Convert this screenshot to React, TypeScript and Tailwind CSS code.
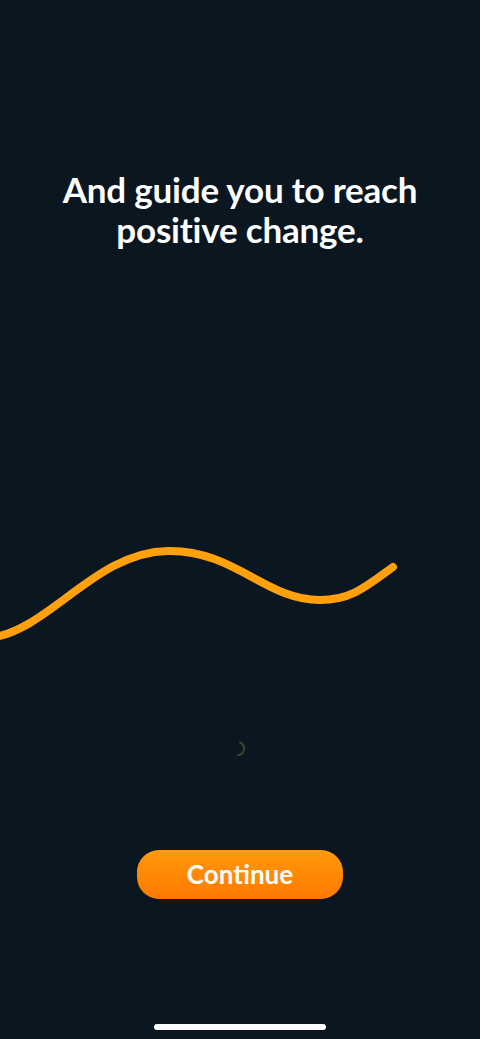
import React from 'react';

export default function App() {
  return (
    <div className="flex h-[1039px] w-[480px] flex-col items-center overflow-hidden bg-[#0a1620] font-['Lato',sans-serif] text-white">
      <h1 className="mt-[169px] w-full text-center text-[35px] font-bold leading-[40px] tracking-[-0.2px]">
        And guide you to reach
        <br />
        positive change.
      </h1>

      <svg className="mt-[281px] block shrink-0" width="480" height="120" viewBox="0 0 480 120">
        <path
          d="M -10 108 C 50 100, 95 22, 168 21 C 235 20, 265 70, 320 70 C 352 70, 368 55, 393 37"
          fill="none"
          stroke="#ffa00c"
          strokeWidth="8"
          strokeLinecap="round"
        />
      </svg>

      <svg className="mt-[90px] ml-[4px] block shrink-0" width="16" height="18" viewBox="0 0 16 18">
        <path d="M 6 2.5 A 6.5 6.5 0 0 1 4 15" fill="none" stroke="#3b4628" strokeWidth="2" strokeLinecap="round" />
      </svg>

      <button className="mt-[92px] flex h-[49px] w-[206px] items-center justify-center rounded-[22px] bg-gradient-to-b from-[#ff9a0c] to-[#ff7800] text-[26px] font-bold text-white">
        Continue
      </button>

      <div className="mt-auto mb-[9px] h-[6px] w-[172px] rounded-full bg-white" />
    </div>
  );
}
